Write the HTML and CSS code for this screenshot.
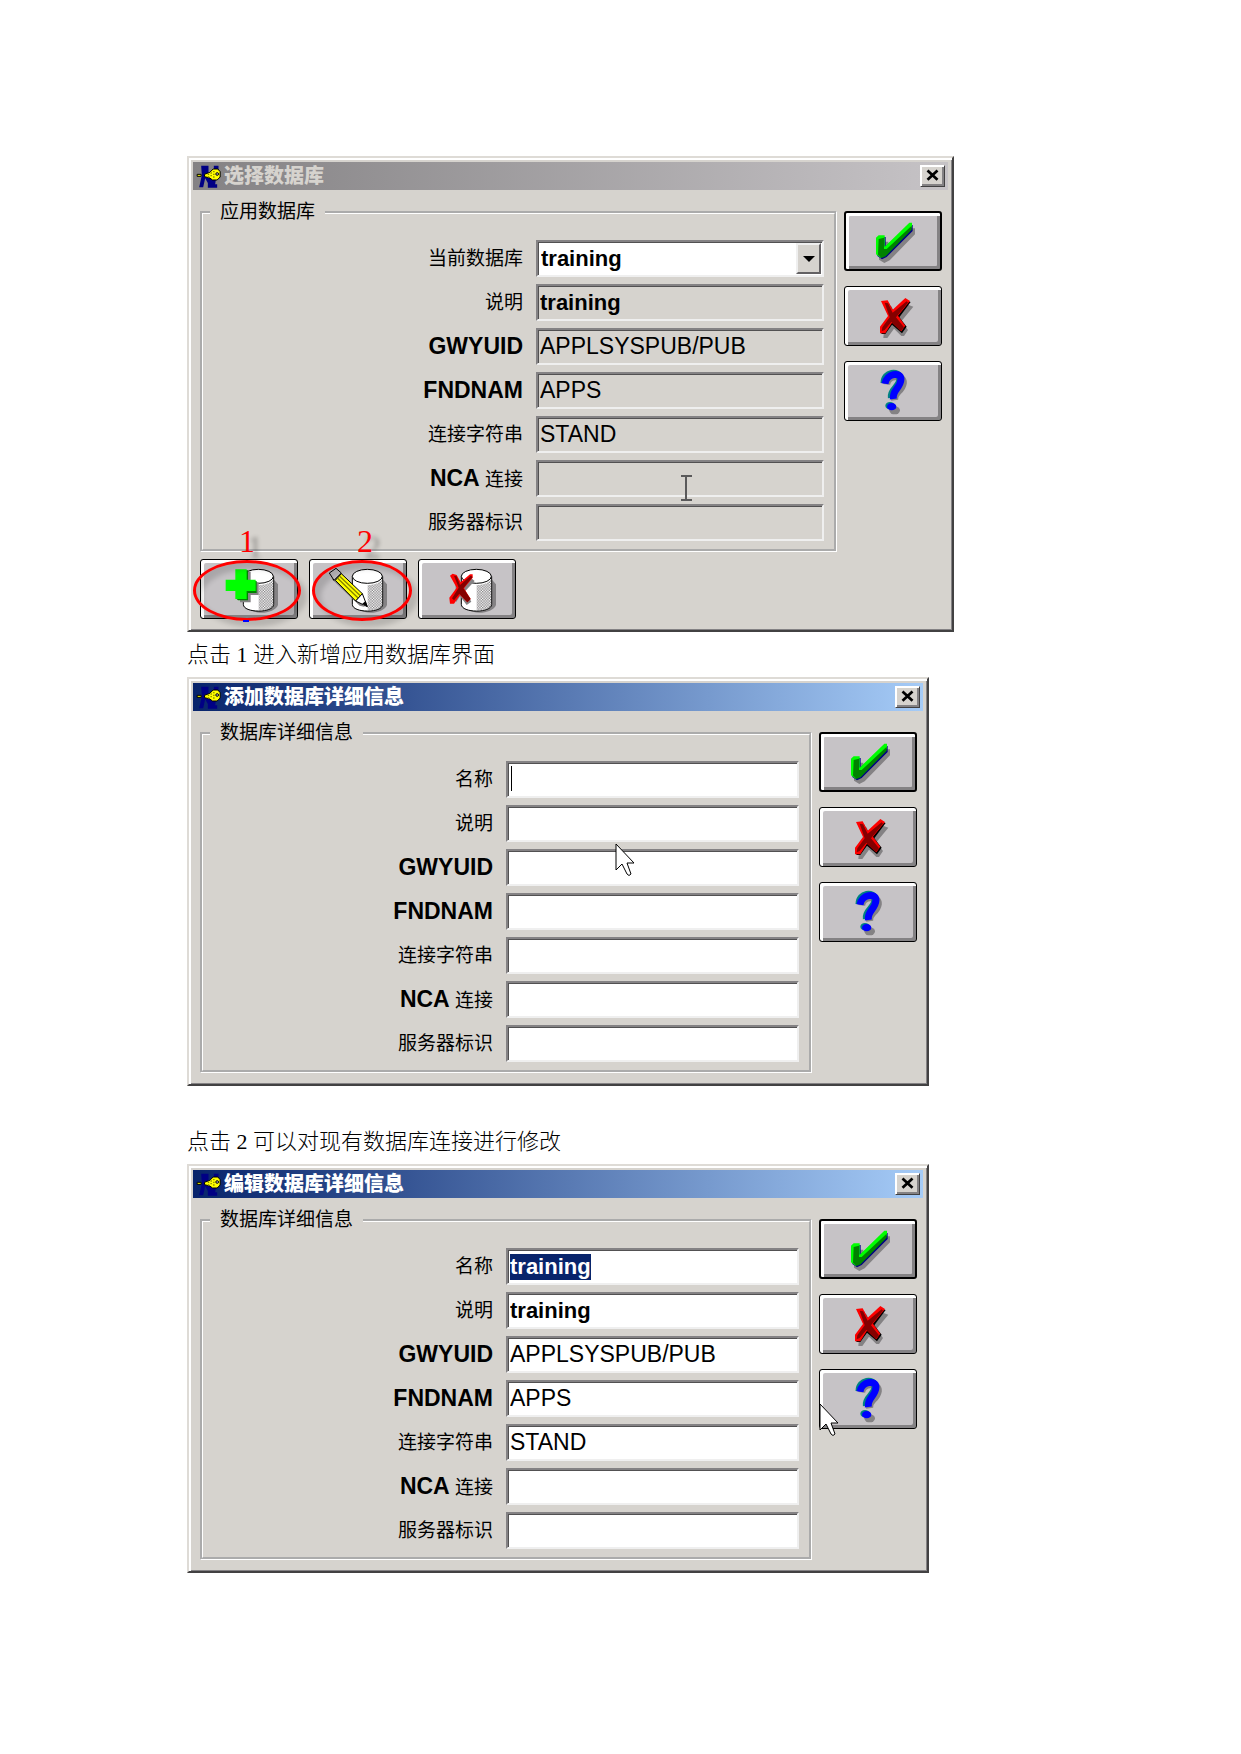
FILE: index.html
```html
<!DOCTYPE html>
<html lang="zh-CN">
<head>
  <meta charset="UTF-8">
  <title>应用数据库</title>
  <meta name="viewport" content="width=device-width, initial-scale=1.0">
  <link rel="stylesheet" href="styles.css">
</head>
<body>

<!-- Shared icons -->
<svg class="sprite" aria-hidden="true">
  <symbol id="icon-check" viewBox="0 0 294 180">
    <path fill="#848284" d="M105 92h28v26l70-66h10v18l-76 78-16 8-16-10z"/>
    <path fill="#000084" d="M100 78h25v28l73-64h8v18l-78 78-14 7-14-10z"/>
    <path fill="#00ff00" d="M96 80l8-7h18v34l74-72h8v14l-86 84-8 7-14-10z"/>
    <path fill="#008200" d="M104 84l16-4v34h8l75-70v12l-78 80-12 5-11-10z"/>
  </symbol>
  <symbol id="icon-cross" viewBox="0 0 294 180">
    <path fill="#848284" d="M124 60h18l12 24 38-28 16 6-36 44 20 26-12 18h-8l-22-22-20 28h-12l2-24 20-28z"/>
    <path fill="#000" d="M117 50l18 2 14 26 40-34 11 4-34 46 22 28-14 20-30-26-20 28h-12l4-22 20-30z"/>
    <path fill="#ff0000" d="M111 45l20-2 15 28 38-35 14 9-36 44 22 30-12 17-28-26-20 32h-16v-20l24-32z"/>
    <path fill="#840000" d="M122 50l10 2 14 28 42-34 4 4-36 44 24 30-10 12-28-28-20 24-9 4 2-12 22-30z"/>
  </symbol>
  <symbol id="icon-help" viewBox="0 0 294 180">
    <g fill="none" stroke-width="21">
      <path stroke="#848284" d="M128 70C132 38 180 42 178 66C174 94 148 92 152 118"/>
      <path stroke="#008284" d="M120 66C120 32 165 28 168 52C168 80 138 84 142 110"/>
      <path stroke="#0000ff" d="M123 68C128 36 170 32 171 54C170 82 144 86 148 114"/>
    </g>
    <ellipse fill="#848284" cx="152" cy="148" rx="16" ry="12"/>
    <ellipse fill="#008284" cx="138" cy="134" rx="14" ry="11"/>
    <ellipse fill="#0000ff" cx="143" cy="137" rx="14" ry="11"/>
  </symbol>
  <symbol id="cylinder" viewBox="0 0 294 180">
    <path fill="#848284" d="M150 150h20l50-90 14 16v62c-8 24-64 32-84 12z"/>
    <path fill="#fff" stroke="#000" stroke-width="3" d="M130 52v84c0 27 91 27 91 0V52z"/>
    <path fill="url(#dither)" d="M176 78c24 0 38-8 44-18v78c-6 14-24 18-44 18z"/>
    <ellipse fill="#fff" stroke="#000" stroke-width="3" cx="175" cy="52" rx="45" ry="21"/>
  </symbol>
  <symbol id="icon-add" viewBox="0 0 294 180">
    <use href="#cylinder"/>
    <path fill="#848284" d="M114 38h38v32h24v38h-24v22h-32v-22z"/>
    <path fill="#008200" d="M110 34h34v32h26v36h-26v22h-30l-4-4z"/>
    <path fill="#00ff00" d="M106 31h34v31h27v34h-27v24h-34V96H77V62h29z"/>
  </symbol>
  <symbol id="icon-edit" viewBox="0 0 294 180">
    <use href="#cylinder"/>
    <path fill="#848284" d="M68 60l16-6 84 90-16-4z"/>
    <path fill="#c6c3c6" stroke="#000" stroke-width="3" d="M61 42l20-14 16 14-22 22z"/>
    <path fill="#ffff00" stroke="#000" stroke-width="3" d="M79 64l18-20 63 60-20 22z"/>
    <path stroke="#848200" stroke-width="4" d="M86 58l62 60M92 52l62 58"/>
    <path fill="#fff" stroke="#000" stroke-width="3" d="M140 126l20-22 15 39z"/>
    <path d="M160 134l10-8 6 18z"/>
  </symbol>
  <symbol id="icon-delete" viewBox="0 0 294 180">
    <use href="#cylinder"/>
    <path fill="#848284" d="M112 58l16 22 32-22 10 8-28 30 18 32-14 10-20-26-12 18z"/>
    <path fill="#ff0000" d="M96 50l8-6 12 4 12 22 28-24h8v10l-26 32 20 32-10 10-22-22-18 26h-12l-2-18 22-30z"/>
    <path fill="#840000" d="M108 50l8 2 10 26 32-28 6 4-28 34 22 32-10 10-24-26-16 20-6-6 20-32z"/>
  </symbol>
  <symbol id="icon-key" viewBox="0 0 72 69">
    <path fill="#000084" d="M14 2h22v22l14 6 2-10V2h14v18l-8 24-2 14h6v10H34V54l-8-14-6 27H8l8-36z"/>
    <path fill="#ffff00" stroke="#000" stroke-width="3" d="M2 28h12v6H2zM24 28l16-6 10-10h14l7 8v16l-9 9H48l-8-6-16-4z"/>
    <path fill="#848200" d="M34 26h4v4h-4zM34 34h4v4h-4zM42 22h4v4h-4zM42 30h4v4h-4zM50 26h4v4h-4zM50 34h4v4h-4zM50 18h4v4h-4z"/>
    <circle fill="#c6c3c6" stroke="#000" stroke-width="3" cx="62" cy="27" r="4"/>
  </symbol>
  <symbol id="icon-close" viewBox="0 0 25 22">
    <path fill="none" stroke="#000" stroke-width="3" d="M7 5l11 10M18 5L7 15"/>
  </symbol>
  <symbol id="icon-pointer" viewBox="0 0 20 34">
    <path fill="#fff" stroke="#000" d="M1 1v26l6-6 5 10q2 3 4 0l-4-11h7z"/>
  </symbol>
  <defs>
    <pattern id="dither" width="8" height="8" patternUnits="userSpaceOnUse">
      <path fill="#848284" d="M0 0h4v4H0zM4 4h4v4H4z"/>
    </pattern>
  </defs>
</svg>

<main class="page">

  <!-- Select database -->
  <section class="dialog dialog-select">
    <header class="titlebar inactive">
      <svg class="title-icon"><use href="#icon-key"/></svg>
      <h2>选择数据库</h2>
      <button type="button" class="close" aria-label="关闭"><svg><use href="#icon-close"/></svg></button>
    </header>
    <div class="dialog-body">
      <fieldset>
        <legend>应用数据库</legend>
        <div class="row">
          <label for="current">当前数据库</label>
          <div class="field">
            <select id="current"><option>training</option></select>
            <span class="arrow"></span>
          </div>
        </div>
        <div class="row">
          <label for="desc1">说明</label>
          <div class="field"><input type="text" id="desc1" value="training" readonly></div>
        </div>
        <div class="row">
          <label for="gwyuid1"><b>GWYUID</b></label>
          <div class="field"><input type="text" id="gwyuid1" class="caps" value="APPLSYSPUB/PUB" readonly></div>
        </div>
        <div class="row">
          <label for="fndnam1"><b>FNDNAM</b></label>
          <div class="field"><input type="text" id="fndnam1" class="caps" value="APPS" readonly></div>
        </div>
        <div class="row">
          <label for="connect1">连接字符串</label>
          <div class="field"><input type="text" id="connect1" class="caps" value="STAND" readonly></div>
        </div>
        <div class="row">
          <label for="nca1"><b>NCA</b> 连接</label>
          <div class="field">
            <input type="text" id="nca1" readonly>
            <svg class="ibeam" viewBox="0 0 11 26"><path fill="none" stroke="#5a595a" stroke-width="2" d="M0 1h11M0 25h11M5 1v24"/></svg>
          </div>
        </div>
        <div class="row">
          <label for="server1">服务器标识</label>
          <div class="field"><input type="text" id="server1" readonly></div>
        </div>
      </fieldset>
      <div class="actions">
        <button type="button" class="btn default" aria-label="确定"><svg><use href="#icon-check"/></svg></button>
        <button type="button" class="btn" aria-label="取消"><svg><use href="#icon-cross"/></svg></button>
        <button type="button" class="btn" aria-label="帮助"><svg><use href="#icon-help"/></svg></button>
      </div>
    </div>
    <footer class="tools">
      <div class="tool">
        <button type="button" class="btn" aria-label="新增"><svg><use href="#icon-add"/></svg></button>
        <span class="mark">1</span>
        <span class="ring"></span>
        <span class="dash"></span>
      </div>
      <div class="tool">
        <button type="button" class="btn" aria-label="编辑"><svg><use href="#icon-edit"/></svg></button>
        <span class="mark">2</span>
        <span class="ring"></span>
      </div>
      <div class="tool">
        <button type="button" class="btn" aria-label="删除"><svg><use href="#icon-delete"/></svg></button>
      </div>
    </footer>
  </section>

  <p class="caption">点击 1 进入新增应用数据库界面</p>

  <!-- Add database -->
  <section class="dialog">
    <header class="titlebar">
      <svg class="title-icon"><use href="#icon-key"/></svg>
      <h2>添加数据库详细信息</h2>
      <button type="button" class="close" aria-label="关闭"><svg><use href="#icon-close"/></svg></button>
    </header>
    <div class="dialog-body">
      <fieldset>
        <legend>数据库详细信息</legend>
        <div class="row">
          <label for="name2">名称</label>
          <div class="field"><input type="text" id="name2"><span class="caret"></span></div>
        </div>
        <div class="row">
          <label for="desc2">说明</label>
          <div class="field"><input type="text" id="desc2"></div>
        </div>
        <div class="row">
          <label for="gwyuid2"><b>GWYUID</b></label>
          <div class="field">
            <input type="text" id="gwyuid2" class="caps">
            <svg class="pointer pointer-field"><use href="#icon-pointer"/></svg>
          </div>
        </div>
        <div class="row">
          <label for="fndnam2"><b>FNDNAM</b></label>
          <div class="field"><input type="text" id="fndnam2" class="caps"></div>
        </div>
        <div class="row">
          <label for="connect2">连接字符串</label>
          <div class="field"><input type="text" id="connect2" class="caps"></div>
        </div>
        <div class="row">
          <label for="nca2"><b>NCA</b> 连接</label>
          <div class="field"><input type="text" id="nca2"></div>
        </div>
        <div class="row">
          <label for="server2">服务器标识</label>
          <div class="field"><input type="text" id="server2"></div>
        </div>
      </fieldset>
      <div class="actions">
        <button type="button" class="btn default" aria-label="确定"><svg><use href="#icon-check"/></svg></button>
        <button type="button" class="btn" aria-label="取消"><svg><use href="#icon-cross"/></svg></button>
        <button type="button" class="btn" aria-label="帮助"><svg><use href="#icon-help"/></svg></button>
      </div>
    </div>
  </section>

  <p class="caption caption-spaced">点击 2 可以对现有数据库连接进行修改</p>

  <!-- Edit database -->
  <section class="dialog">
    <header class="titlebar">
      <svg class="title-icon"><use href="#icon-key"/></svg>
      <h2>编辑数据库详细信息</h2>
      <button type="button" class="close" aria-label="关闭"><svg><use href="#icon-close"/></svg></button>
    </header>
    <div class="dialog-body">
      <fieldset>
        <legend>数据库详细信息</legend>
        <div class="row">
          <label for="name3">名称</label>
          <div class="field"><input type="text" id="name3" value="training"></div>
        </div>
        <div class="row">
          <label for="desc3">说明</label>
          <div class="field"><input type="text" id="desc3" value="training"></div>
        </div>
        <div class="row">
          <label for="gwyuid3"><b>GWYUID</b></label>
          <div class="field"><input type="text" id="gwyuid3" class="caps" value="APPLSYSPUB/PUB"></div>
        </div>
        <div class="row">
          <label for="fndnam3"><b>FNDNAM</b></label>
          <div class="field"><input type="text" id="fndnam3" class="caps" value="APPS"></div>
        </div>
        <div class="row">
          <label for="connect3">连接字符串</label>
          <div class="field"><input type="text" id="connect3" class="caps" value="STAND"></div>
        </div>
        <div class="row">
          <label for="nca3"><b>NCA</b> 连接</label>
          <div class="field"><input type="text" id="nca3"></div>
        </div>
        <div class="row">
          <label for="server3">服务器标识</label>
          <div class="field"><input type="text" id="server3"></div>
        </div>
      </fieldset>
      <div class="actions">
        <button type="button" class="btn default" aria-label="确定"><svg><use href="#icon-check"/></svg></button>
        <button type="button" class="btn" aria-label="取消"><svg><use href="#icon-cross"/></svg></button>
        <button type="button" class="btn" aria-label="帮助"><svg><use href="#icon-help"/></svg></button>
        <svg class="pointer pointer-help"><use href="#icon-pointer"/></svg>
      </div>
    </div>
  </section>

</main>

<script>
  const nameInput = document.getElementById('name3');
  nameInput.focus({ preventScroll: true });
  nameInput.select();
</script>

</body>
</html>
```

FILE: styles.css
```css
* {
  box-sizing: border-box;
}

body {
  margin: 0;
  background-color: #fff;
  color: #000;
  font-family: "Liberation Sans", "Noto Sans CJK SC", sans-serif;
  font-size: 19px;
}

svg {
  display: block;
}

.sprite {
  position: absolute;
  width: 0;
  height: 0;
}

.page {
  max-width: 1241px;
  margin: 0 auto;
  padding: 156px 187px;
}

.caption {
  margin: 0;
  font-family: "Liberation Serif", "Noto Sans CJK SC", serif;
  font-size: 22px;
  font-weight: 300;
  line-height: 45px;
}

.caption-spaced {
  margin-top: 33px;
}

/* Dialog window */
.dialog {
  max-width: 742px;
  padding: 4px;
  background-color: #d6d3ce;
  border: 2px solid;
  border-color: #dedbd6 #424142 #424142 #dedbd6;
  box-shadow: inset 2px 2px #fff, inset -1px -1px #848284;
}

.dialog-select {
  max-width: 767px;
}

.titlebar {
  display: flex;
  align-items: center;
  height: 28px;
  padding: 0 3px;
  background: linear-gradient(to right, #08246b, #a5cbf7);
  color: #fff;
}

.titlebar.inactive {
  background: linear-gradient(to right, #848284, #c6c3c6);
  color: #d6d3ce;
}

.title-icon {
  width: 25px;
  height: 23px;
  margin-right: 3px;
}

.titlebar h2 {
  flex: 1;
  margin: 0;
  font-size: 20px;
  font-weight: 900;
  line-height: 28px;
}

.close {
  width: 25px;
  height: 22px;
  padding: 0;
  background-color: #d6d3ce;
  border: 1px solid;
  border-color: #fff #424142 #424142 #fff;
  box-shadow: inset 1px 1px #fff, inset -2px -2px #848284;
}

.close svg {
  width: 23px;
  height: 20px;
}

.dialog-body {
  display: flex;
  gap: 7px;
  padding: 10px 6px 7px 7px;
}

/* Form */
fieldset {
  flex: 1;
  display: flex;
  flex-direction: column;
  gap: 7px;
  min-width: 0;
  margin: 0;
  padding: 16px 10px 8px;
  border: 3px groove #fff;
}

legend {
  margin-left: -3px;
  padding: 0 10px;
  line-height: 24px;
}

.row {
  display: grid;
  grid-template-columns: 1fr 293px;
  align-items: center;
  gap: 13px;
}

.dialog-select .row {
  grid-template-columns: 1fr 288px;
}

.row label {
  text-align: right;
  line-height: 24px;
}

.row b {
  font-size: 23px;
}

.field {
  position: relative;
}

.field input,
.field select {
  display: block;
  width: 100%;
  height: 37px;
  margin: 0;
  padding: 0 3px;
  background-color: #fff;
  border: 2px solid;
  border-color: #848284 #efefef #efefef #848284;
  border-radius: 0;
  box-shadow: inset 1px 1px #525152;
  color: #000;
  font-family: inherit;
  font-size: 22px;
  font-weight: bold;
  outline: none;
  appearance: none;
}

.field input {
  padding: 0 2px;
}

.field .caps {
  font-size: 23px;
  font-weight: normal;
}

.field input[readonly] {
  background-color: #d6d3ce;
}

.field input::selection {
  background-color: #08246b;
  color: #fff;
}

.arrow {
  position: absolute;
  top: 3px;
  right: 3px;
  width: 25px;
  height: 31px;
  background-color: #d6d3ce;
  border: 2px solid;
  border-color: #efefef #636163 #636163 #efefef;
  pointer-events: none;
}

.arrow::after {
  content: "";
  position: absolute;
  top: 11px;
  left: 5px;
  border: 6px solid transparent;
  border-top-color: #000;
  border-bottom: 0;
}

.caret {
  position: absolute;
  top: 5px;
  left: 5px;
  width: 1px;
  height: 25px;
  background-color: #000;
}

/* Buttons */
.actions {
  position: relative;
  display: flex;
  flex-direction: column;
  gap: 15px;
  padding-top: 11px;
}

.btn {
  display: block;
  width: 98px;
  height: 60px;
  padding: 0;
  background-color: #c6c3c6;
  border: 1px solid #000;
  border-radius: 3px;
  box-shadow: inset 3px 3px #fff, inset -3px -3px #848284, inset 0 0 0 4px #c6c3c6;
}

.btn.default {
  border-width: 2px;
}

.btn svg {
  width: 98px;
  height: 60px;
  margin: -1px;
}

.btn.default svg {
  margin: -2px;
}

.tools {
  display: flex;
  gap: 11px;
  padding: 0 7px 7px;
}

/* Numbered marks over the tool buttons */
.tool {
  position: relative;
}

.mark {
  position: absolute;
  top: -34px;
  left: 39px;
  color: #ff0000;
  font-family: "Liberation Serif", serif;
  font-size: 32px;
  line-height: 32px;
  text-shadow: 8px 6px 4px rgba(0, 0, 0, 0.3);
}

.tool + .tool .mark {
  left: 48px;
}

.ring {
  position: absolute;
  top: 1px;
  left: -7px;
  width: 108px;
  height: 61px;
  border: 3px solid #f00;
  border-radius: 50%;
  box-shadow: 6px 6px 5px rgba(0, 0, 0, 0.15), inset 6px 6px 5px rgba(0, 0, 0, 0.15);
  pointer-events: none;
}

.tool + .tool .ring {
  left: 3px;
  width: 100px;
}

.dash {
  position: absolute;
  top: 61px;
  left: 43px;
  width: 6px;
  height: 2px;
  background-color: #00f;
}

/* Mouse pointers */
.ibeam {
  position: absolute;
  top: 15px;
  left: 145px;
  width: 11px;
  height: 26px;
  z-index: 1;
}

.pointer {
  position: absolute;
  width: 20px;
  height: 34px;
  z-index: 1;
}

.pointer-field {
  top: -6px;
  left: 109px;
}

.pointer-help {
  top: 195px;
  left: 0;
}

@media (max-width: 900px) {
  .page {
    padding: 24px;
  }

  .row,
  .dialog-select .row {
    grid-template-columns: 1fr 1fr;
  }
}
```
